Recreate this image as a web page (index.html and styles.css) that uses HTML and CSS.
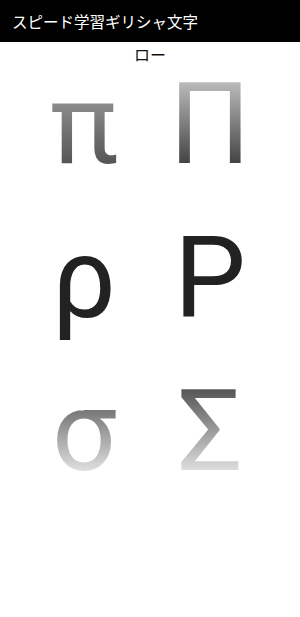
FILE: index.html
```html
<!DOCTYPE html>
<html lang="ja">

<head>
  <meta charset="UTF-8">
  <meta name="viewport" content="width=device-width, initial-scale=1.0">
  <title>スピード学習ギリシャ文字</title>
  <link rel="stylesheet" href="styles.css">
</head>

<body>
  <div class="app-bar">スピード学習ギリシャ文字</div>

  <div class="name">ロー</div>

  <!-- 前・現在・次の文字 -->
  <div class="letters">
    <div class="cell"><span class="glyph prev-lower">π</span></div>
    <div class="cell"><span class="glyph prev-upper">Π</span></div>
    <div class="cell"><span class="glyph current">ρ</span></div>
    <div class="cell"><span class="glyph current">Ρ</span></div>
    <div class="cell"><span class="glyph next-lower">σ</span></div>
    <div class="cell"><span class="glyph next-upper">Σ</span></div>
  </div>
</body>

</html>
```

FILE: styles.css
```css
body {
  margin: 0;
  padding: 0;
  background: #fff;
  font-family: "Noto Sans CJK JP", "Noto Sans", sans-serif;
}

.app-bar {
  height: 42px;
  display: flex;
  align-items: center;
  padding-left: 12px;
  background: #000;
  color: #fff;
  font-size: 15.5px;
}

.name {
  height: 25px;
  line-height: 25px;
  text-align: center;
  font-size: 16px;
  color: #111;
}

.letters {
  display: grid;
  grid-template-columns: 126px 126px;
  row-gap: 39.5px;
  padding-left: 21px;
}

.cell {
  display: flex;
  justify-content: center;
}

.glyph {
  display: block;
  font-family: Roboto, "Noto Sans", sans-serif;
  font-size: 114px;
  line-height: 114px;
  height: 114px;
}

.current {
  color: #222;
}

.prev-lower,
.prev-upper,
.next-lower,
.next-upper {
  color: transparent;
  -webkit-background-clip: text;
  background-clip: text;
}

.prev-lower {
  background-image: linear-gradient(to bottom, #8c8c8c 36px, #555 96px);
}

.prev-upper {
  background-image: linear-gradient(to bottom, #bbb 15px, #444 96px);
}

.next-lower {
  background-image: linear-gradient(to bottom, #777 36px, #ddd 96px);
}

.next-upper {
  background-image: linear-gradient(to bottom, #555 15px, #ddd 96px);
}
```
